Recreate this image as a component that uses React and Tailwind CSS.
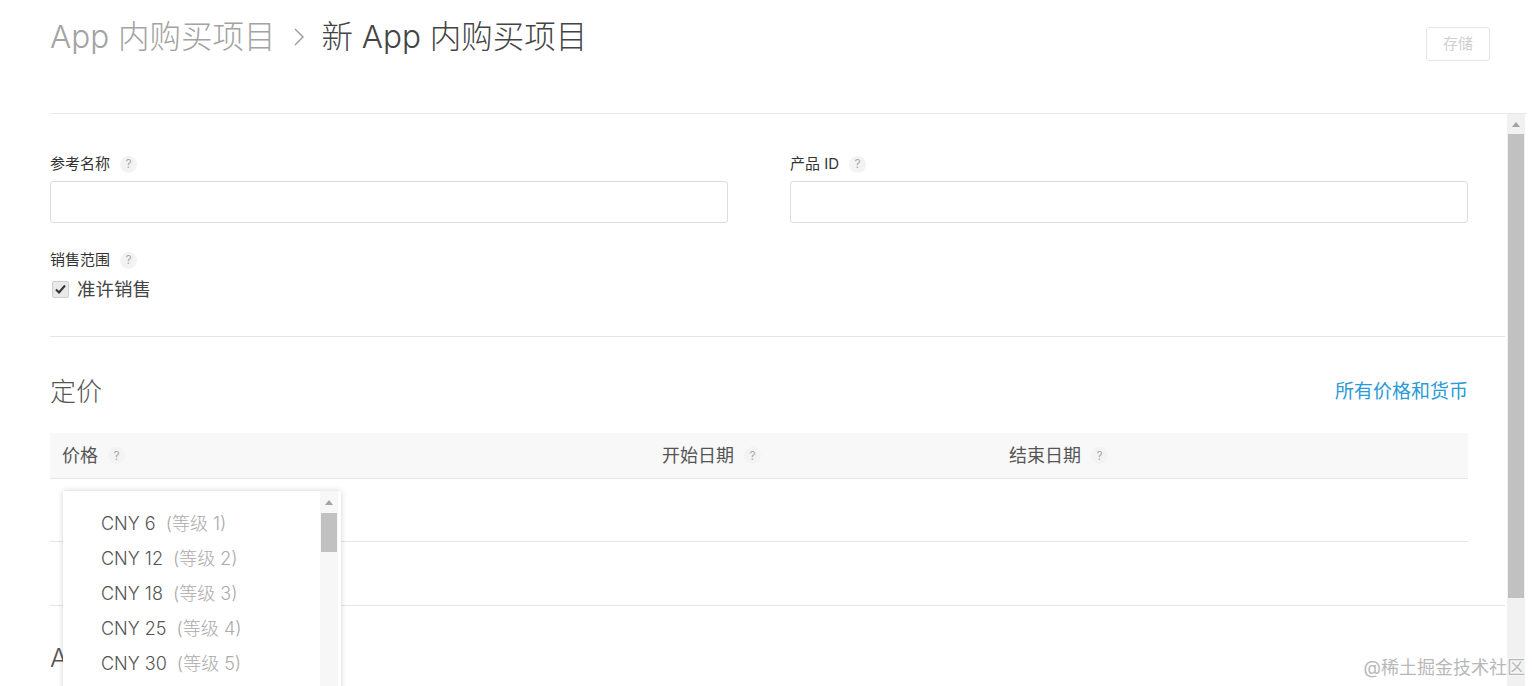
import React from 'react';

const Help = () => (
    <span className="ml-[10px] inline-flex h-[17px] w-[17px] items-center justify-center rounded-full bg-[#f3f3f3] text-[12px] leading-none text-[#aaa]">?</span>
);

const tiers = [
    ['CNY 6', '(等级 1)'],
    ['CNY 12', '(等级 2)'],
    ['CNY 18', '(等级 3)'],
    ['CNY 25', '(等级 4)'],
    ['CNY 30', '(等级 5)'],
];

export default function App() {
    return (
        <div
            className="relative h-[686px] w-[1532px] overflow-hidden bg-white text-[#333]"
            style={{ fontFamily: 'Inter, "Noto Sans CJK SC", sans-serif' }}
        >
            {/* header */}
            <div className="ml-[50px] mr-[5px] flex h-[114px] items-start justify-between border-b border-[#e8e8e8]">
                <div className="mt-[14px] flex items-center text-[31.5px] font-light leading-[46px]">
                    <span className="text-[#a3a3a3]">App 内购买项目</span>
                    <svg className="mx-[16px]" width="14" height="22" viewBox="0 0 14 22">
                        <polyline points="3,3 11,11 3,19" fill="none" stroke="#9a9a9a" strokeWidth="1.4" />
                    </svg>
                    <span className="text-[#444]">新 App 内购买项目</span>
                </div>
                <button className="mr-[37px] mt-[27px] h-[34px] w-[64px] rounded-[3px] border border-[#e6e6e6] text-[15px] text-[#cfcfcf]">
                    存储
                </button>
            </div>

            {/* body */}
            <div className="flex h-[572px]">
                <div className="ml-[50px] flex-1">
                    <div className="pr-[39px] pt-[40px]">
                        <div className="grid grid-cols-2 gap-x-[62px]">
                            <div>
                                <div className="flex h-[20px] items-center text-[15px] text-[#333]">
                                    参考名称<Help />
                                </div>
                                <div className="mt-[7px] h-[42px] rounded-[3px] border border-[#dcdcdc]"></div>
                            </div>
                            <div>
                                <div className="flex h-[20px] items-center text-[15px] text-[#333]">
                                    产品 ID<Help />
                                </div>
                                <div className="mt-[7px] h-[42px] rounded-[3px] border border-[#dcdcdc]"></div>
                            </div>
                        </div>
                        <div className="mt-[27px] flex h-[20px] items-center text-[15px] text-[#333]">
                            销售范围<Help />
                        </div>
                        <div className="mt-[7px] flex items-center">
                            <span className="ml-[2px] flex h-[17px] w-[17px] items-center justify-center rounded-[2px] border border-[#cfcfcf] bg-[#e9e9e9]">
                                <svg width="13" height="13" viewBox="0 0 13 13">
                                    <polyline points="2,6.5 5,9.5 11,2.5" fill="none" stroke="#333" strokeWidth="2" />
                                </svg>
                            </span>
                            <span className="ml-[8px] text-[18.5px] leading-[24px] text-[#444]">准许销售</span>
                        </div>
                    </div>

                    <div className="mt-[35px] mr-[2px] border-t border-[#e6e6e6]"></div>

                    <div className="pr-[39px]">
                        <div className="mt-[37px] flex items-center justify-between">
                            <span className="text-[26px] font-light leading-[36px] text-[#555]">定价</span>
                            <a className="text-[19px] leading-[26px] text-[#2a9bd6]">所有价格和货币</a>
                        </div>
                        <div className="mt-[23px] flex h-[46px] items-center border-b border-[#e6e6e6] bg-[#f8f8f8] text-[18px] text-[#555]">
                            <div className="flex w-[612px] items-center pl-[12px]">价格<Help /></div>
                            <div className="flex w-[347px] items-center">开始日期<Help /></div>
                            <div className="flex items-center">结束日期<Help /></div>
                        </div>
                        <div className="h-[63px] border-b border-[#e6e6e6]"></div>
                    </div>

                    <div className="mt-[63px] mr-[2px] border-t border-[#e6e6e6]"></div>
                    <div className="mt-[34px] text-[26px] font-light leading-[36px] text-[#555]">App</div>
                </div>

                {/* page scrollbar */}
                <div className="flex w-[18px] flex-col bg-[#f1f1f1]">
                    <div className="flex h-[20px] items-center justify-center">
                        <svg width="8" height="5" viewBox="0 0 8 5"><polygon points="0,5 4,0 8,5" fill="#a3a3a3" /></svg>
                    </div>
                    <div className="mx-[1px] h-[464px] bg-[#c1c1c1]"></div>
                </div>
                <div className="w-[7px]"></div>
            </div>

            {/* price tier dropdown */}
            <div className="absolute left-[63px] top-[491px] flex h-[200px] w-[278px] bg-white shadow-[0_0_6px_rgba(0,0,0,0.18)]">
                <div className="flex-1 pl-[38px] pt-[15px]">
                    {tiers.map(([p, t]) => (
                        <div key={p} className="flex h-[35px] items-center text-[18px] font-light">
                            <span className="text-[#555]">{p}</span>
                            <span className="ml-[10px] text-[#ababab]">{t}</span>
                        </div>
                    ))}
                </div>
                <div className="mr-[3px] flex w-[18px] flex-col bg-[#f7f7f7]">
                    <div className="flex h-[22px] items-center justify-center">
                        <svg width="8" height="5" viewBox="0 0 8 5"><polygon points="0,5 4,0 8,5" fill="#a3a3a3" /></svg>
                    </div>
                    <div className="mx-[1px] h-[39px] bg-[#c1c1c1]"></div>
                </div>
            </div>

            {/* watermark */}
            <div
                className="absolute bottom-[6px] right-[7px] text-[18px] leading-[24px] text-[#b8b8b8]"
                style={{ textShadow: '0 0 2px #fff, 0 0 2px #fff' }}
            >
                @稀土掘金技术社区
            </div>
        </div>
    );
}
